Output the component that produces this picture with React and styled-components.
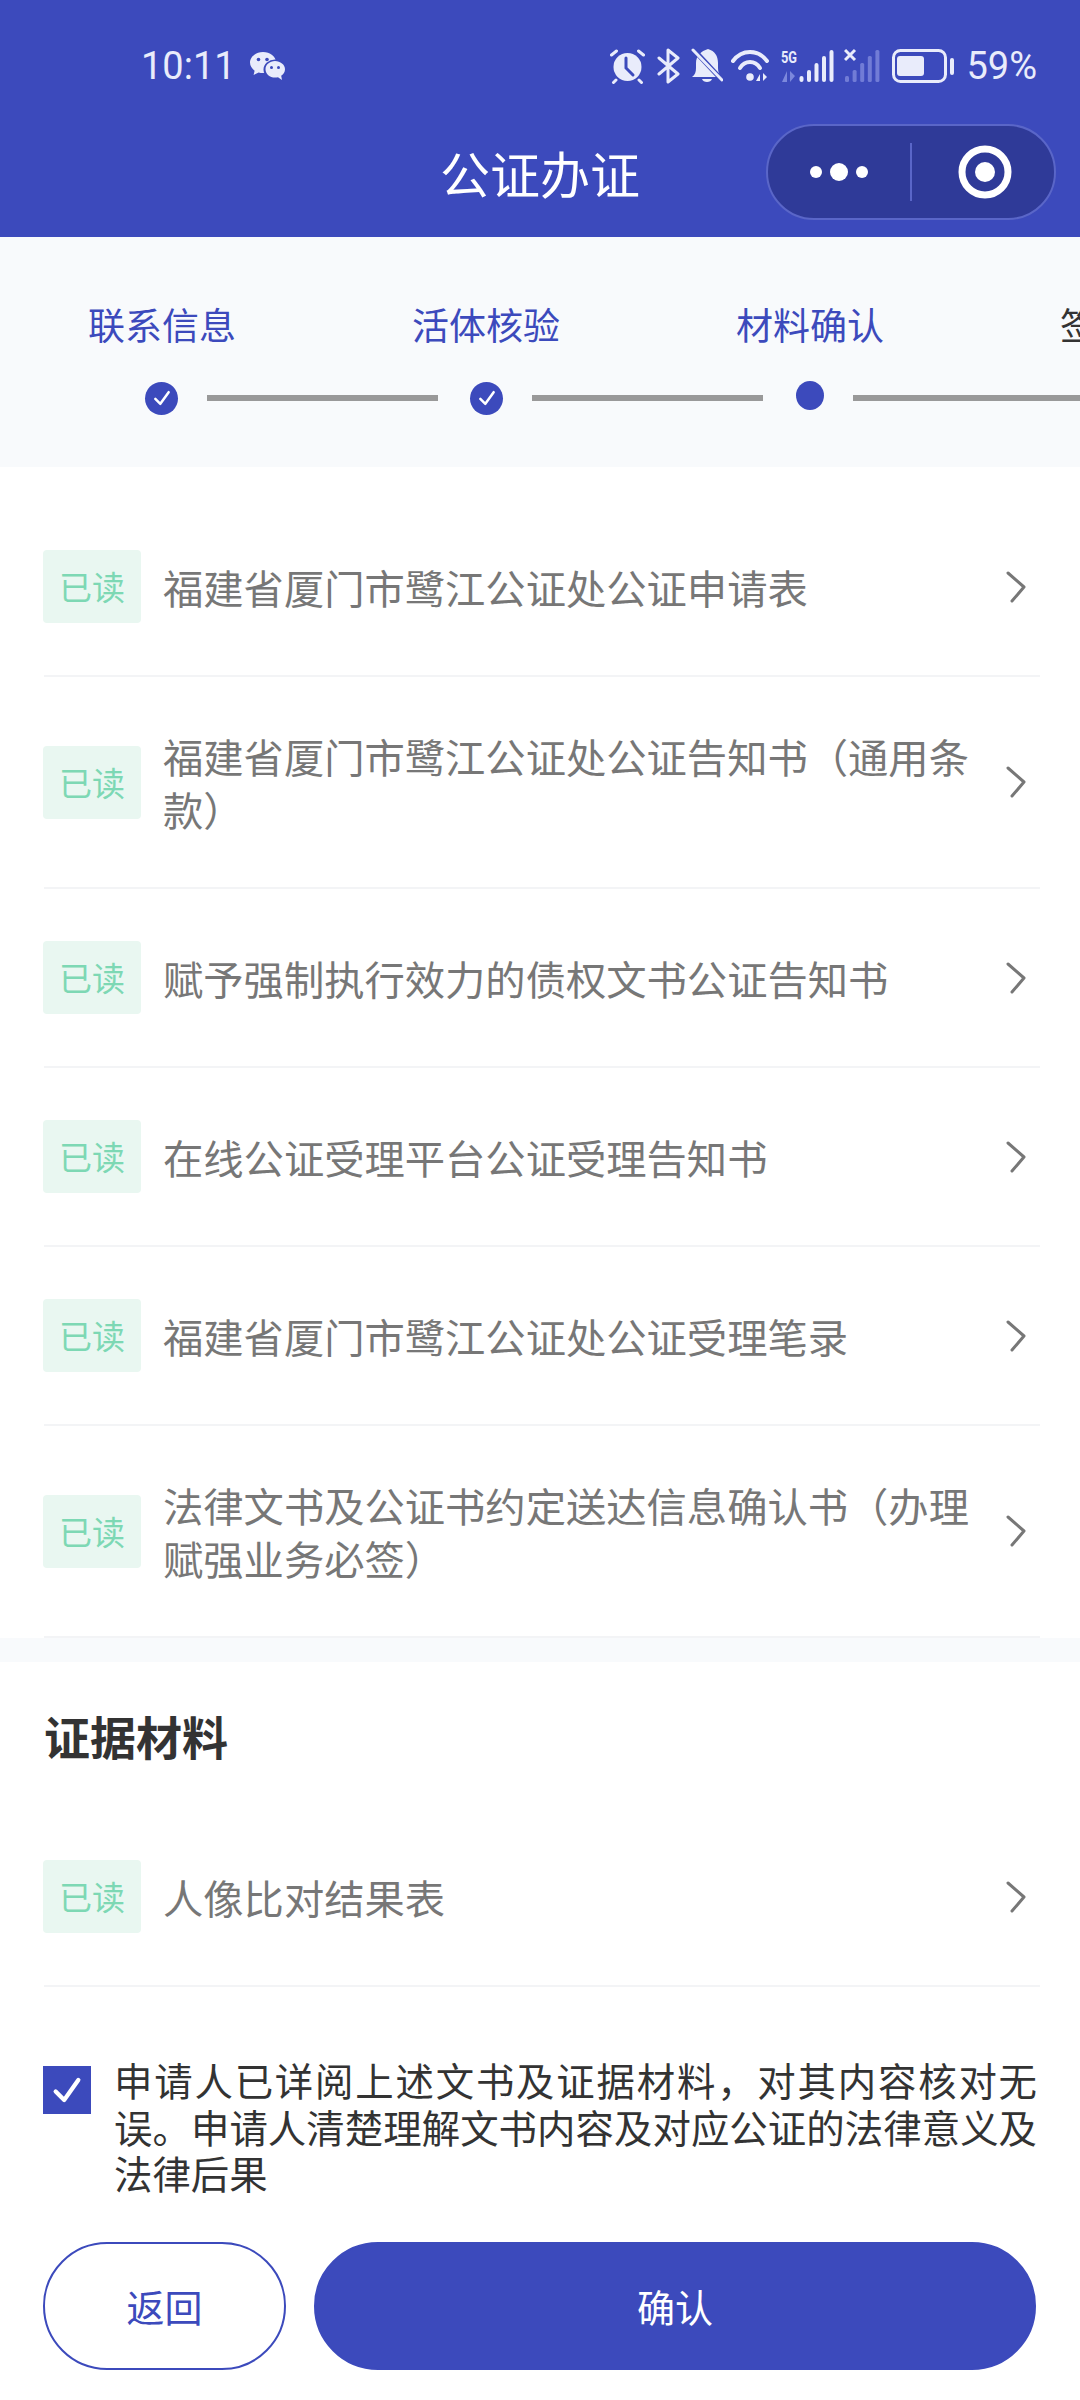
import React from "react";
import styled, { createGlobalStyle } from "styled-components";

const BLUE = "#3c4abc";
const LIGHT = "#e9ecfb";

const GlobalStyle = createGlobalStyle`
  html, body {
    margin: 0;
    padding: 0;
    background: #fff;
  }
  * {
    box-sizing: border-box;
  }
`;

const Page = styled.div`
  width: 1080px;
  height: 2400px;
  overflow: hidden;
  background: #fff;
  font-family: "Noto Sans CJK SC", "Noto Sans", sans-serif;
`;

const Header = styled.header`
  height: 237px;
  background: ${BLUE};
`;

const StatusBar = styled.div`
  height: 110px;
  padding: 22px 43px 0 141px;
  display: flex;
  align-items: center;
  justify-content: space-between;
  color: ${LIGHT};
  font-family: Roboto, sans-serif;
  font-size: 38px;
`;

const StatusGroup = styled.div`
  display: flex;
  align-items: center;
`;

const StatusIcon = styled.svg`
  display: block;
  flex: none;
  margin-left: ${(p) => p.$left || 0}px;
`;

const NavBar = styled.div`
  height: 124px;
  padding: 0 24px;
  display: grid;
  grid-template-columns: 1fr auto 1fr;
  align-items: center;
`;

const Title = styled.h1`
  grid-column: 2;
  margin: 0;
  color: #fff;
  font-size: 50px;
  font-weight: 400;
  line-height: 60px;
`;

const Capsule = styled.div`
  grid-column: 3;
  justify-self: end;
  width: 290px;
  height: 96px;
  border: 2px solid #5a66c8;
  border-radius: 48px;
  background: #2f3a98;
  display: flex;
  align-items: center;
`;

const CapsuleSide = styled.div`
  flex: 1;
  display: flex;
  align-items: center;
  justify-content: center;
`;

const CapsuleDivider = styled.div`
  width: 2px;
  height: 58px;
  background: #5a66c8;
`;

const TargetIcon = styled.svg`
  display: block;
  margin-left: 4px;
`;

const StepBand = styled.section`
  height: 230px;
  padding-top: 61px;
  background: #f8fafc;
  overflow: hidden;
`;

const StepLabels = styled.div`
  display: flex;
  width: 1296px;
`;

const StepLabel = styled.div`
  width: 324px;
  flex: none;
  text-align: center;
  font-size: 37px;
  line-height: 52px;
  color: ${(p) => (p.$pending ? "#333" : BLUE)};
`;

const StepTrack = styled.div`
  margin-top: 31px;
  padding-left: 145px;
  width: 1296px;
  height: 34px;
  display: flex;
  align-items: center;
`;

const StepDot = styled.div`
  flex: none;
  width: ${(p) => (p.$current ? 28 : 33)}px;
  height: ${(p) => (p.$current ? 29 : 33)}px;
  margin-top: ${(p) => (p.$current ? -6 : 0)}px;
  border-radius: 50%;
  background: ${BLUE};
  display: flex;
  align-items: center;
  justify-content: center;
`;

const StepLine = styled.div`
  flex: none;
  width: ${(p) => p.$width}px;
  height: 6px;
  margin: 0 ${(p) => p.$right}px 0 29px;
  background: #999;
`;

const FirstList = styled.div`
  padding-top: 31px;
`;

const Row = styled.div`
  margin: 0 40px 0 44px;
  padding: 52px 0;
  border-bottom: 2px solid #f3f4f6;
  display: flex;
  align-items: center;
`;

const ReadTag = styled.span`
  flex: none;
  width: 98px;
  height: 73px;
  margin-left: -1px;
  border-radius: 4px;
  background: #e9f7f1;
  color: #7dd8b4;
  font-size: 33px;
  line-height: 73px;
  text-align: center;
`;

const RowText = styled.div`
  width: 812px;
  margin-left: 22px;
  color: #777;
  font-size: 40.3px;
  line-height: 53px;
`;

const Chevron = styled.svg`
  display: block;
  flex: none;
  margin-left: 31px;
`;

const SectionGap = styled.div`
  height: 24px;
  background: #f8fafc;
`;

const SectionTitle = styled.h2`
  margin: 0;
  height: 146px;
  padding: 0 44px;
  color: #333;
  font-size: 46px;
  font-weight: 700;
  line-height: 146px;
`;

const Agreement = styled.div`
  margin: 69px 43px 0;
  display: flex;
  align-items: flex-start;
`;

const CheckBox = styled.div`
  flex: none;
  width: 48px;
  height: 48px;
  margin-top: 10px;
  background: ${BLUE};
  display: flex;
  align-items: center;
  justify-content: center;
`;

const AgreementText = styled.p`
  width: 924px;
  margin: 0 0 0 23px;
  color: #333;
  font-size: 38.4px;
  line-height: 46.5px;
  text-align: justify;
`;

const Actions = styled.div`
  margin: 46px 44px 0 43px;
  display: flex;
  gap: 28px;
`;

const Button = styled.button`
  flex: ${(p) => (p.$primary ? 1 : "none")};
  width: ${(p) => (p.$primary ? "auto" : "243px")};
  height: 128px;
  padding: 0;
  border: 2px solid ${BLUE};
  border-radius: 64px;
  background: ${(p) => (p.$primary ? BLUE : "#fff")};
  color: ${(p) => (p.$primary ? "#fff" : BLUE)};
  font-family: inherit;
  font-size: 38px;
  line-height: 52px;
`;

const Check = ({ size, width = 3 }) => (
  <svg width={size} height={size} viewBox="0 0 24 24" fill="none">
    <path d="M4 13 L10 19 L20 5" stroke="#fff" strokeWidth={width} strokeLinecap="round" strokeLinejoin="round" />
  </svg>
);

const RowItem = ({ children }) => (
  <Row>
    <ReadTag>已读</ReadTag>
    <RowText>{children}</RowText>
    <Chevron width="20" height="32" viewBox="0 0 20 32" fill="none">
      <path d="M2 2 L18 16 L6 30" stroke="#777" strokeWidth="3" strokeLinecap="round" strokeLinejoin="round" />
    </Chevron>
  </Row>
);

const Wechat = () => (
  <StatusIcon $left={14} width="36" height="28" viewBox="0 0 36 28">
    <path d="M13 0C6 0 0 4.6 0 10.5c0 3.4 2 6.2 4.6 8.2L3.600 23l5-2.600c1.400.4 2.900.6 4.400.6C20 21 26 16.400 26 10.500 26 4.600 20 0 13 0z" fill={LIGHT} />
    <ellipse cx="25" cy="17.500" rx="11.500" ry="10" fill={BLUE} />
    <path d="M25 9c-5.200 0-9.500 3.600-9.500 8.300s4.300 8.300 9.500 8.300c1 0 2-.1 3-.4L32 28l-.8-4.200c2.300-1.500 3.800-3.800 3.800-6.500C35 12.600 30.200 9 25 9z" fill={LIGHT} />
    <circle cx="8.500" cy="7.500" r="1.800" fill={BLUE} />
    <circle cx="17" cy="7.500" r="1.800" fill={BLUE} />
    <circle cx="21.500" cy="15.500" r="1.500" fill={BLUE} />
    <circle cx="28.500" cy="15.500" r="1.500" fill={BLUE} />
  </StatusIcon>
);

const Alarm = () => (
  <StatusIcon width="35" height="36" viewBox="0 0 35 36" fill="none">
    <circle cx="17.500" cy="19" r="14" fill={LIGHT} />
    <path d="M16 10V20L23 27" stroke={BLUE} strokeWidth="3" strokeLinecap="round" />
    <path d="M1.500 7L6.500 3M28.500 3L33.500 7M6 32L3.500 34.500M29 32L31.500 34.500" stroke={LIGHT} strokeWidth="3" strokeLinecap="round" />
  </StatusIcon>
);

const Bluetooth = () => (
  <StatusIcon $left={12} width="23" height="36" viewBox="0 0 23 36" fill="none">
    <path d="M2 10L21 26L11 34V2L21 10L2 26" stroke={LIGHT} strokeWidth="3" strokeLinejoin="round" strokeLinecap="round" />
  </StatusIcon>
);

const BellOff = () => (
  <StatusIcon $left={11} width="32" height="36" viewBox="0 0 32 36" fill="none">
    <path d="M1 29C4 27 5 24 5 20V15C5 8 10 3 17 1C24 3 27 8 27 15V20C27 24 28 27 31 29Z" fill={LIGHT} />
    <path d="M11 31C12 35 20 35 21 31Z" fill={LIGHT} />
    <path d="M2 1L31 32" stroke={BLUE} strokeWidth="5" />
    <path d="M2 2L31 32" stroke={LIGHT} strokeWidth="3" strokeLinecap="round" />
  </StatusIcon>
);

const Wifi = () => (
  <StatusIcon $left={8} width="42" height="36" viewBox="0 0 42 36" fill="none">
    <path d="M2 13C11 1 27 1 36 13" stroke={LIGHT} strokeWidth="4" strokeLinecap="round" />
    <path d="M9 20C14 12 24 12 29 20" stroke={LIGHT} strokeWidth="4" strokeLinecap="round" />
    <circle cx="19" cy="29" r="3.800" fill={LIGHT} />
    <path d="M29 33V26L25 33ZM32 25V33L36 29Z" fill={LIGHT} />
  </StatusIcon>
);

const bars = [6, 12, 19, 26, 32];

const Signal5G = () => (
  <StatusIcon $left={8} width="53" height="36" viewBox="0 0 53 36" fill="none">
    <text x="0" y="15" fontFamily="Roboto, sans-serif" fontWeight="700" fontSize="17" textLength="16" lengthAdjust="spacingAndGlyphs" fill={LIGHT}>5G</text>
    <path d="M6 34V23L1 34ZM9 23V34L14 28Z" fill="#7c88dc" />
    {bars.map((h, i) => (
      <rect key={i} x={18.500 + i * 7.500} y={34 - h} width="4" height={h} rx="2" fill={LIGHT} />
    ))}
  </StatusIcon>
);

const SignalOff = () => (
  <StatusIcon $left={10} width="36" height="36" viewBox="0 0 36 36" fill="none">
    <path d="M1 2L11 12M11 2L1 12" stroke={LIGHT} strokeWidth="3" />
    {bars.map((h, i) => (
      <rect key={i} x={1 + i * 7.600} y={34 - h} width="4" height={h} rx="1.500" fill="#717cd6" />
    ))}
  </StatusIcon>
);

const Battery = () => (
  <StatusIcon $left={12} width="62" height="36" viewBox="0 0 62 36" fill="none">
    <rect x="1.500" y="2.500" width="52" height="31" rx="7" stroke={LIGHT} strokeWidth="3" />
    <rect x="5" y="8" width="27" height="20" rx="3" fill={LIGHT} />
    <rect x="58" y="10" width="4" height="17" rx="2" fill={LIGHT} />
  </StatusIcon>
);

const Percent = styled.span`
  margin-left: 12px;
  line-height: 36px;
`;

const App = () => (
  <Page>
    <GlobalStyle />
    <Header>
      <StatusBar>
        <StatusGroup>
          <span>10:11</span>
          <Wechat />
        </StatusGroup>
        <StatusGroup>
          <Alarm />
          <Bluetooth />
          <BellOff />
          <Wifi />
          <Signal5G />
          <SignalOff />
          <Battery />
          <Percent>59%</Percent>
        </StatusGroup>
      </StatusBar>
      <NavBar>
        <Title>公证办证</Title>
        <Capsule>
          <CapsuleSide>
            <svg width="58" height="20" viewBox="0 0 58 20">
              <circle cx="6" cy="10" r="6" fill="#fff" />
              <circle cx="29" cy="10" r="9" fill="#fff" />
              <circle cx="52" cy="10" r="6" fill="#fff" />
            </svg>
          </CapsuleSide>
          <CapsuleDivider />
          <CapsuleSide>
            <TargetIcon width="54" height="54" viewBox="0 0 54 54" fill="none">
              <circle cx="27" cy="27" r="23" stroke="#fff" strokeWidth="7" />
              <circle cx="27" cy="27" r="10" fill="#fff" />
            </TargetIcon>
          </CapsuleSide>
        </Capsule>
      </NavBar>
    </Header>

    <StepBand>
      <StepLabels>
        <StepLabel>联系信息</StepLabel>
        <StepLabel>活体核验</StepLabel>
        <StepLabel>材料确认</StepLabel>
        <StepLabel $pending>签署文书</StepLabel>
      </StepLabels>
      <StepTrack>
        <StepDot><Check size={20} /></StepDot>
        <StepLine $width={231} $right={32} />
        <StepDot><Check size={20} /></StepDot>
        <StepLine $width={231} $right={33} />
        <StepDot $current />
        <StepLine $width={300} $right={0} />
      </StepTrack>
    </StepBand>

    <FirstList>
      <RowItem>福建省厦门市鹭江公证处公证申请表</RowItem>
      <RowItem>福建省厦门市鹭江公证处公证告知书（通用条款）</RowItem>
      <RowItem>赋予强制执行效力的债权文书公证告知书</RowItem>
      <RowItem>在线公证受理平台公证受理告知书</RowItem>
      <RowItem>福建省厦门市鹭江公证处公证受理笔录</RowItem>
      <RowItem>法律文书及公证书约定送达信息确认书（办理赋强业务必签）</RowItem>
    </FirstList>

    <SectionGap />
    <SectionTitle>证据材料</SectionTitle>
    <RowItem>人像比对结果表</RowItem>

    <Agreement>
      <CheckBox><Check size={34} width={3} /></CheckBox>
      <AgreementText>
        申请人已详阅上述文书及证据材料，对其内容核对无误。申请人清楚理解文书内容及对应公证的法律意义及法律后果
      </AgreementText>
    </Agreement>

    <Actions>
      <Button>返回</Button>
      <Button $primary>确认</Button>
    </Actions>
  </Page>
);

export default App;
